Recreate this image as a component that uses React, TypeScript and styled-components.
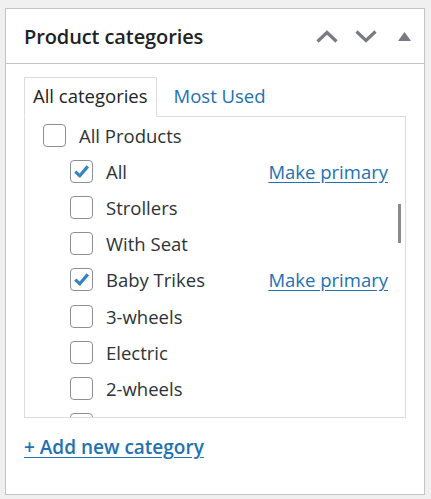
import React from "react";
import styled, { createGlobalStyle } from "styled-components";

const Global = createGlobalStyle`
  html, body { margin: 0; padding: 0; background: #f0f0f1; }
  body { font-family: "Open Sans", "Noto Sans", sans-serif; color: #2c3338; }
`;

const Page = styled.div`
  padding: 8px 6px 4px 5px;
`;

const Panel = styled.section`
  background: #fff;
  border: 1px solid #c3c4c7;
  height: 485px;
  display: flex;
  flex-direction: column;
`;

const Header = styled.header`
  height: 54px;
  border-bottom: 1px solid #c3c4c7;
  display: flex;
  align-items: center;
  padding: 0 0 0 18px;
`;

const Title = styled.h2`
  margin: 0;
  flex: 1;
  font-size: 20px;
  font-weight: 600;
  color: #1d2327;
  letter-spacing: -0.1px;
`;

const Handles = styled.div`
  display: flex;
  align-items: center;
`;

const HandleBtn = styled.span`
  width: 39px;
  height: 36px;
  display: flex;
  align-items: center;
  justify-content: center;
`;

const Body = styled.div`
  padding: 13px 18px 0 18px;
  flex: 1;
  display: flex;
  flex-direction: column;
`;

const Tabs = styled.div`
  display: flex;
  align-items: flex-end;
  height: 40px;
  position: relative;
  z-index: 1;
  margin-bottom: -1px;
`;

const Tab = styled.div<{ $active?: boolean }>`
  box-sizing: border-box;
  height: 40px;
  padding: 0 8px 3px;
  display: flex;
  align-items: center;
  font-size: 18.5px;
  color: ${(p) => (p.$active ? "#1d2327" : "#2271b1")};
  background: ${(p) => (p.$active ? "#fff" : "transparent")};
  border: 1px solid ${(p) => (p.$active ? "#dcdcde" : "transparent")};
  border-bottom-color: ${(p) => (p.$active ? "#fff" : "transparent")};
  margin-right: ${(p) => (p.$active ? "8px" : "0")};
`;

const ListBox = styled.div`
  border: 1px solid #dcdcde;
  height: 300px;
  overflow: hidden;
  position: relative;
`;

const List = styled.ul`
  list-style: none;
  margin: 0;
  padding: 0 0 0 18px;
`;

const Row = styled.li<{ $level: number }>`
  height: 36.2px;
  display: flex;
  align-items: center;
  padding-left: ${(p) => p.$level * 27}px;
  padding-right: 17px;
  font-size: 18.5px;
  color: #2c3338;
`;

const Box = styled.span`
  width: 23px;
  height: 23px;
  box-sizing: border-box;
  border: 1px solid #8c8f94;
  border-radius: 4px;
  background: #fff;
  margin-right: 13px;
  flex: none;
  display: flex;
  align-items: center;
  justify-content: center;
`;

const Label = styled.span`
  flex: 1;
  white-space: nowrap;
`;

const Primary = styled.a`
  color: #2271b1;
  text-decoration: underline;
  text-underline-offset: 3px;
  font-size: 18.5px;
  white-space: nowrap;
`;

const Thumb = styled.div`
  position: absolute;
  left: 373px;
  top: 87px;
  width: 3px;
  height: 39px;
  background: #8a8a8a;
`;

const AddLink = styled.a`
  margin-top: 16px;
  align-self: flex-start;
  color: #2271b1;
  font-size: 19px;
  font-weight: 600;
  text-decoration: underline;
  text-underline-offset: 3px;
`;

const Check = () => (
  <svg width="17" height="17" viewBox="0 0 17 17">
    <path d="M2.3 8.6 L6.8 12.8 L14.8 3.4" fill="none" stroke="#3582c4" strokeWidth="3.2" />
  </svg>
);

const items = [
  { id: "all-products", name: "All Products", level: 0 },
  { id: "all", name: "All", level: 1, checked: true },
  { id: "strollers", name: "Strollers", level: 1 },
  { id: "with-seat", name: "With Seat", level: 1 },
  { id: "baby-trikes", name: "Baby Trikes", level: 1, checked: true },
  { id: "3-wheels", name: "3-wheels", level: 1 },
  { id: "electric", name: "Electric", level: 1 },
  { id: "2-wheels", name: "2-wheels", level: 1 },
  { id: "next", name: "", level: 1 },
];

export default function App() {
  return (
    <Page>
      <Global />
      <Panel>
        <Header>
          <Title>Product categories</Title>
          <Handles>
            <HandleBtn>
              <svg width="22" height="13" viewBox="0 0 22 13">
                <path d="M1.5 11.5 L11 2.5 L20.5 11.5" fill="none" stroke="#787c82" strokeWidth="3.2" />
              </svg>
            </HandleBtn>
            <HandleBtn>
              <svg width="22" height="13" viewBox="0 0 22 13">
                <path d="M1.5 1.5 L11 10.5 L20.5 1.5" fill="none" stroke="#787c82" strokeWidth="3.2" />
              </svg>
            </HandleBtn>
            <HandleBtn>
              <svg width="13" height="9" viewBox="0 0 13 9">
                <path d="M6.5 0 L13 9 L0 9 Z" fill="#787c82" />
              </svg>
            </HandleBtn>
          </Handles>
        </Header>
        <Body>
          <Tabs>
            <Tab $active>All categories</Tab>
            <Tab>Most Used</Tab>
          </Tabs>
          <ListBox>
            <List>
              {items.map((it) => (
                <Row key={it.id} $level={it.level}>
                  <Box>{it.checked && <Check />}</Box>
                  <Label>{it.name}</Label>
                  {it.checked && <Primary href="#">Make primary</Primary>}
                </Row>
              ))}
            </List>
            <Thumb />
          </ListBox>
          <AddLink href="#">+ Add new category</AddLink>
        </Body>
      </Panel>
    </Page>
  );
}
